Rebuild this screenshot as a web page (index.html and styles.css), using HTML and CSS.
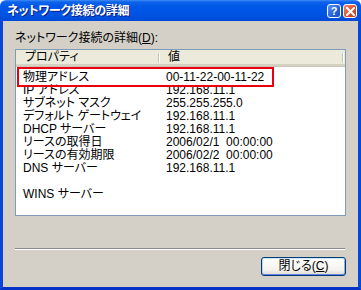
FILE: index.html
```html
<!DOCTYPE html>
<html lang="ja">
<head>
<meta charset="utf-8">
<link rel="stylesheet" href="styles.css">
</head>
<body>
<div class="window">
  <div class="titlebar">
    <span class="title">ネットワーク接続の詳細</span>
    <div class="tb-buttons">
      <span class="tb-btn help">?</span>
      <span class="tb-btn close"><svg width="9" height="9" viewBox="0 0 9 9"><path d="M1 1 L8 8 M8 1 L1 8" stroke="#fff" stroke-width="2" stroke-linecap="square"/></svg></span>
    </div>
  </div>
  <div class="frame">
    <div class="client">
      <div class="label">ネットワーク接続の詳細(<u>D</u>):</div>
      <div class="listview">
        <div class="header">
          <div class="hcell h1">プロパティ</div>
          <div class="hcell h2">値</div>
          <div class="hcell h3"></div>
        </div>
        <div class="rows">
          <div class="row"><span class="c1">物理アドレス</span><span class="c2">00-11-22-00-11-22</span></div>
          <div class="row"><span class="c1">IP アドレス</span><span class="c2">192.168.11.1</span></div>
          <div class="row"><span class="c1">サブネット マスク</span><span class="c2">255.255.255.0</span></div>
          <div class="row"><span class="c1">デフォルト ゲートウェイ</span><span class="c2">192.168.11.1</span></div>
          <div class="row"><span class="c1">DHCP サーバー</span><span class="c2">192.168.11.1</span></div>
          <div class="row"><span class="c1">リースの取得日</span><span class="c2">2006/02/1  00:00:00</span></div>
          <div class="row"><span class="c1">リースの有効期限</span><span class="c2">2006/02/2  00:00:00</span></div>
          <div class="row"><span class="c1">DNS サーバー</span><span class="c2">192.168.11.1</span></div>
          <div class="row"><span class="c1"></span><span class="c2"></span></div>
          <div class="row"><span class="c1">WINS サーバー</span><span class="c2"></span></div>
        </div>
        <div class="highlight"></div>
      </div>
      <div class="separator"></div>
      <div class="footer">
        <button class="btn">閉じる(<u>C</u>)</button>
      </div>
    </div>
  </div>
</div>
</body>
</html>
```
FILE: styles.css
```css
html, body {
  margin: 0;
  padding: 0;
  background: #ffffff;
}

body {
  font-family: "Liberation Sans", "Noto Sans CJK JP", sans-serif;
  font-size: 12px;
  font-feature-settings: "palt";
  color: #000;
}

.window {
  width: 361px;
  height: 290px;
  display: flex;
  flex-direction: column;
  border-radius: 6px 6px 0 0;
  overflow: hidden;
}

.titlebar {
  height: 21px;
  flex: none;
  display: flex;
  align-items: center;
  justify-content: space-between;
  padding: 0 4px 0 7px;
  background: linear-gradient(#3d8bf5 0px, #0d63ea 2px, #0058e8 6px, #0054e3 14px, #004ad8 21px);
}

.title {
  color: #fff;
  font-weight: bold;
  font-size: 12px;
  line-height: 14px;
  text-shadow: 1px 1px #0a1c80;
  letter-spacing: -0.3px;
}

.tb-buttons {
  display: flex;
  gap: 2px;
  padding-top: 1px;
}

.tb-btn {
  width: 14px;
  height: 14px;
  box-sizing: border-box;
  border: 1px solid #fff;
  border-radius: 3px;
  display: flex;
  align-items: center;
  justify-content: center;
  color: #fff;
  font-weight: bold;
  font-family: "Liberation Sans", sans-serif;
  font-size: 11px;
  line-height: 12px;
}

.help {
  background: linear-gradient(135deg, #5d93f2, #2460dc 60%, #1d4fc4);
}

.close {
  background: linear-gradient(135deg, #f08a6a, #e0502c 55%, #c8361c);
}

.frame {
  flex: 1;
  border-left: 3px solid #0845d8;
  border-right: 3px solid #0845d8;
  border-bottom: 3px solid #0732c8;
  background: #d4d0c8;
  display: flex;
  flex-direction: column;
}

.client {
  flex: 1;
  padding: 0 12px;
  display: flex;
  flex-direction: column;
}

.label {
  margin-top: 10px;
  height: 14px;
  line-height: 14px;
}

.listview {
  margin-top: 4px;
  height: 167px;
  box-sizing: border-box;
  border: 1px solid #7f9db9;
  background: #fff;
  position: relative;
}

.header {
  height: 17px;
  box-sizing: border-box;
  display: flex;
  background: #ebeadb;
  border-bottom: 1px solid #cbc7b8;
  box-shadow: inset 0 -2px #d6d2c2;
}

.hcell {
  box-sizing: border-box;
  line-height: 15px;
  position: relative;
}

.h1 {
  width: 143px;
  padding-left: 9px;
}

.h2 {
  width: 184px;
  padding-left: 9px;
}

.h3 {
  flex: 1;
}

.h1::after, .h2::after {
  content: "";
  position: absolute;
  right: 0;
  top: 3px;
  bottom: 3px;
  width: 1px;
  background: #c7c5b2;
  box-shadow: 1px 0 #fff;
}

.rows {
  padding-top: 4px;
}

.row {
  height: 13px;
  line-height: 13px;
  display: flex;
  white-space: pre;
}

.c1 {
  width: 143px;
  padding-left: 7px;
  box-sizing: border-box;
}

.c2 {
  padding-left: 7px;
}

.highlight {
  position: absolute;
  left: 1px;
  top: 17px;
  width: 257px;
  height: 20px;
  box-sizing: border-box;
  border: 2px solid #ec0010;
}

.separator {
  margin-top: 32px;
  margin-right: 1px;
  height: 2px;
  box-sizing: border-box;
  border-top: 1px solid #8a8a8a;
  border-bottom: 1px solid #fff;
}

.footer {
  margin-top: 7px;
  display: flex;
  justify-content: flex-end;
}

.btn {
  width: 85px;
  height: 19px;
  padding: 0;
  font: inherit;
  font-size: 12px;
  line-height: 15px;
  color: #000;
  border: 1px solid #003c74;
  border-radius: 3px;
  background: linear-gradient(#ffffff, #f4f3ee 70%, #dcd8cc);
  box-shadow: inset 0 1px #cee7ff, inset 0 -1px #6982ee, inset 1px 0 #bcd4f6, inset -1px 0 #89ade4;
}
```
